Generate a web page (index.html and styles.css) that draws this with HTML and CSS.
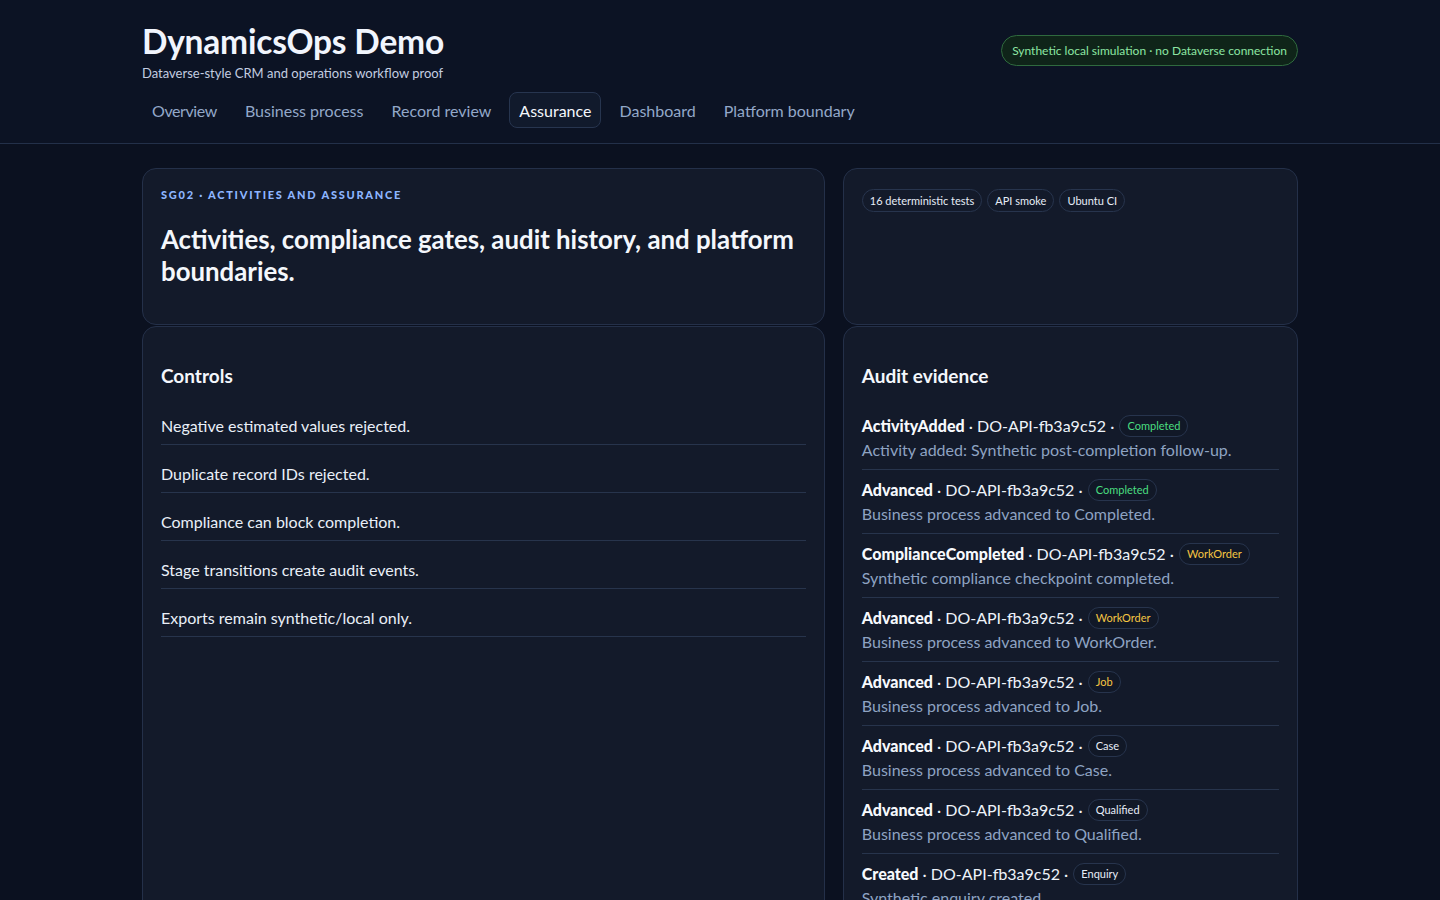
FILE: index.html
```html
<!DOCTYPE html>
<html lang="en">
<head>
<meta charset="utf-8">
<title>DynamicsOps Demo</title>
<link rel="stylesheet" href="styles.css">
</head>
<body>
<header class="site-header">
  <div class="wrap">
    <div class="top-row">
      <div class="brand">
        <h1>DynamicsOps Demo</h1>
        <p class="tagline">Dataverse-style CRM and operations workflow proof</p>
      </div>
      <span class="sim-pill">Synthetic local simulation · no Dataverse connection</span>
    </div>
    <nav class="tabs">
      <a class="tab">Overview</a>
      <a class="tab">Business process</a>
      <a class="tab">Record review</a>
      <a class="tab active">Assurance</a>
      <a class="tab">Dashboard</a>
      <a class="tab">Platform boundary</a>
    </nav>
  </div>
</header>

<main class="wrap grid">
  <section class="card intro">
    <p class="eyebrow">SG02 · Activities and assurance</p>
    <h2>Activities, compliance gates, audit history, and platform boundaries.</h2>
  </section>
  <section class="card">
    <div class="chips">
      <span class="chip">16 deterministic tests</span>
      <span class="chip">API smoke</span>
      <span class="chip">Ubuntu CI</span>
    </div>
  </section>

  <section class="card">
    <h3>Controls</h3>
    <ul class="controls">
      <li>Negative estimated values rejected.</li>
      <li>Duplicate record IDs rejected.</li>
      <li>Compliance can block completion.</li>
      <li>Stage transitions create audit events.</li>
      <li>Exports remain synthetic/local only.</li>
    </ul>
  </section>
  <section class="card">
    <h3>Audit evidence</h3>
    <ul class="audit">
      <li>
        <div class="evt"><strong>ActivityAdded</strong> · DO-API-fb3a9c52 · <span class="tag green">Completed</span></div>
        <div class="desc">Activity added: Synthetic post-completion follow-up.</div>
      </li>
      <li>
        <div class="evt"><strong>Advanced</strong> · DO-API-fb3a9c52 · <span class="tag green">Completed</span></div>
        <div class="desc">Business process advanced to Completed.</div>
      </li>
      <li>
        <div class="evt"><strong>ComplianceCompleted</strong> · DO-API-fb3a9c52 · <span class="tag amber">WorkOrder</span></div>
        <div class="desc">Synthetic compliance checkpoint completed.</div>
      </li>
      <li>
        <div class="evt"><strong>Advanced</strong> · DO-API-fb3a9c52 · <span class="tag amber">WorkOrder</span></div>
        <div class="desc">Business process advanced to WorkOrder.</div>
      </li>
      <li>
        <div class="evt"><strong>Advanced</strong> · DO-API-fb3a9c52 · <span class="tag amber">Job</span></div>
        <div class="desc">Business process advanced to Job.</div>
      </li>
      <li>
        <div class="evt"><strong>Advanced</strong> · DO-API-fb3a9c52 · <span class="tag">Case</span></div>
        <div class="desc">Business process advanced to Case.</div>
      </li>
      <li>
        <div class="evt"><strong>Advanced</strong> · DO-API-fb3a9c52 · <span class="tag">Qualified</span></div>
        <div class="desc">Business process advanced to Qualified.</div>
      </li>
      <li>
        <div class="evt"><strong>Created</strong> · DO-API-fb3a9c52 · <span class="tag">Enquiry</span></div>
        <div class="desc">Synthetic enquiry created.</div>
      </li>
    </ul>
  </section>
</main>
</body>
</html>
```

FILE: styles.css
```css
* { box-sizing: border-box; }

html, body {
  margin: 0;
  padding: 0;
  background: #0b1120;
  color: #e6edf7;
  font-family: "Lato", "Open Sans", "Noto Sans", sans-serif;
  font-size: 16px;
}

.wrap {
  width: 1156px;
  margin: 0 auto;
}

.site-header {
  background: #0c1324;
  border-bottom: 1px solid #233049;
  padding: 21px 0 15px;
}

.top-row {
  display: flex;
  justify-content: space-between;
  align-items: flex-start;
}

.brand h1 {
  margin: 0;
  font-size: 33.5px;
  line-height: 40px;
  font-weight: 700;
  color: #f1f5fd;
  letter-spacing: -0.2px;
}

.tagline {
  margin: 3px 0 0;
  font-size: 13px;
  line-height: 18px;
  color: #c3cde0;
}

.sim-pill {
  margin-top: 14px;
  height: 31px;
  padding: 0 10px;
  display: inline-flex;
  align-items: center;
  border: 1px solid #2f6a3e;
  background: #0f2419;
  color: #8ce6a3;
  border-radius: 16px;
  font-size: 12px;
}

.tabs {
  display: flex;
  gap: 8px;
  margin-top: 10px;
}

.tab {
  height: 36px;
  display: inline-flex;
  align-items: center;
  padding: 0 9px;
  border: 1px solid transparent;
  border-radius: 8px;
  font-size: 16px;
  color: #93a8c9;
}

.tab:first-child {
  letter-spacing: -0.4px;
}

.tab.active {
  background: #111a2c;
  border-color: #27354f;
  color: #f4f7fc;
}

.grid {
  display: grid;
  grid-template-columns: 1.5fr 1fr;
  column-gap: 18px;
  row-gap: 1px;
  padding-top: 24px;
}

.card {
  background: #131a2a;
  border: 1px solid #243049;
  border-radius: 14px;
  padding: 18px;
}

.eyebrow {
  margin: 0;
  font-size: 11px;
  line-height: 16px;
  font-weight: 900;
  letter-spacing: 1.75px;
  text-transform: uppercase;
  color: #8db5ff;
}

.intro h2 {
  margin: 20px 0 19px;
  font-size: 25.8px;
  line-height: 32px;
  font-weight: 700;
  color: #f4f7fc;
}

.chips {
  display: flex;
  gap: 5px;
  margin-top: 2px;
}

.chip {
  height: 23px;
  display: inline-flex;
  align-items: center;
  padding: 0 7px;
  border: 1px solid #27344d;
  border-radius: 12px;
  font-size: 11px;
  color: #e6edf7;
}

h3 {
  margin: 17px 0 6px;
  font-size: 19px;
  line-height: 28px;
  font-weight: 700;
  color: #f4f7fc;
}

.controls,
.audit {
  list-style: none;
  margin: 0;
  padding: 0;
}

.controls {
  padding-top: 1px;
}

.controls li {
  padding: 17px 0 6px;
  line-height: 24px;
  font-size: 16px;
  border-bottom: 1px solid #27344c;
  color: #e9eff8;
}

.audit {
  margin-top: 16px;
}

.audit li {
  padding: 8px 0 7px;
  border-bottom: 1px solid #27344c;
}

.evt {
  height: 24px;
  line-height: 24px;
  font-size: 16px;
  color: #eef3fa;
  display: flex;
  align-items: center;
  white-space: pre;
}

.evt strong {
  font-weight: 900;
  color: #f7f9fd;
}

.desc {
  line-height: 24px;
  font-size: 16px;
  color: #8ea3c2;
}

.tag {
  height: 22px;
  display: inline-flex;
  align-items: center;
  padding: 0 7px;
  margin-left: 1px;
  border: 1px solid #27344d;
  border-radius: 11px;
  font-size: 11px;
  color: #e6edf7;
  background: #111827;
}

.tag.green { color: #4ade80; }
.tag.amber { color: #f5c542; }
```
